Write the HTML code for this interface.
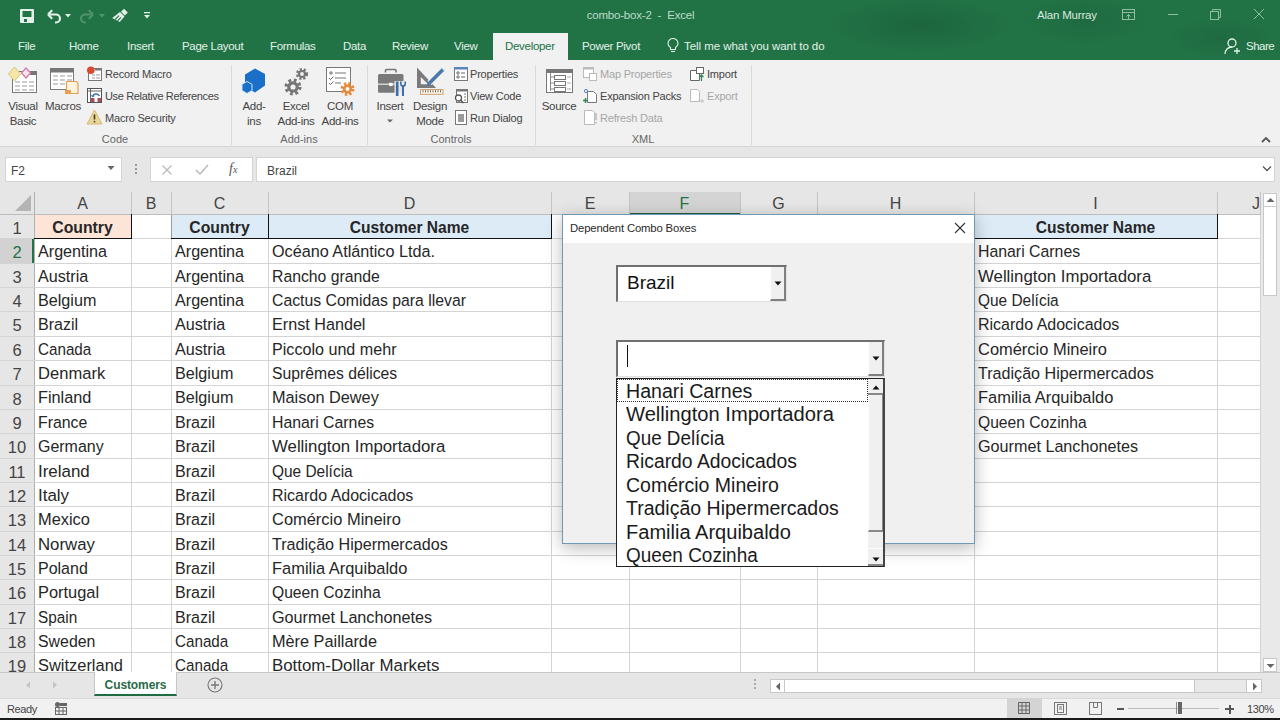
<!DOCTYPE html>
<html><head><meta charset="utf-8"><title>combo-box-2 - Excel</title>
<style>
*{margin:0;padding:0;box-sizing:border-box}
html,body{width:1280px;height:720px;overflow:hidden;background:#fff;font-family:"Liberation Sans",sans-serif}
.a{position:absolute}
.t{position:absolute;white-space:nowrap}
</style></head><body>

<div class="a" style="left:0;top:0;width:1280px;height:60px;background:#217346"></div>
<div class="a" style="left:820px;top:-5px;width:200px;height:60px;background:radial-gradient(ellipse at center,rgba(0,0,0,0.12),rgba(0,0,0,0) 70%)"></div>
<div class="a" style="left:1010px;top:-10px;width:150px;height:60px;background:radial-gradient(ellipse at center,rgba(0,0,0,0.07),rgba(0,0,0,0) 70%)"></div>
<div class="a" style="left:1160px;top:15px;width:120px;height:45px;background:radial-gradient(ellipse at center,rgba(0,0,0,0.08),rgba(0,0,0,0) 70%)"></div>
<!-- QAT icons -->
<svg class="a" style="left:20px;top:9px" width="14" height="14" viewBox="0 0 14 14"><rect x="0" y="0" width="14" height="14" rx="1" fill="#e3f1e8"/><rect x="2.5" y="2" width="9" height="6" fill="#217346"/><rect x="4" y="10" width="3" height="3" fill="#217346"/></svg>
<svg class="a" style="left:46px;top:8px" width="28" height="16" viewBox="0 0 28 16"><path d="M3.5 6.5h6.5a4 4 0 0 1 0 8h-1" fill="none" stroke="#e3f1e8" stroke-width="2.2"/><path d="M2 6.5l4.2-4.2M2 6.5l4.2 4.2" stroke="#e3f1e8" stroke-width="2.2" fill="none"/><path d="M19 6h6l-3 3.5z" fill="#e3f1e8"/></svg>
<svg class="a" style="left:79px;top:8px" width="28" height="16" viewBox="0 0 28 16"><path d="M12.5 6.5h-6.5a4 4 0 0 0 0 8h1" fill="none" stroke="#4f9468" stroke-width="2.2"/><path d="M14 6.5l-4.2-4.2M14 6.5l-4.2 4.2" stroke="#4f9468" stroke-width="2.2" fill="none"/><path d="M20 6h6l-3 3.5z" fill="#4f9468"/></svg>
<svg class="a" style="left:111px;top:8px" width="18" height="16" viewBox="0 0 18 16"><path d="M13 0.8l3.8 3.8-3 3-3.8-3.8z" fill="#e3f1e8"/><path d="M9 4l4.5 4.5-4.8 5.5-7.5-4z" fill="#e3f1e8"/><path d="M4.2 11.5l3.8-3.8M6.5 12.8l3.5-3.5" stroke="#217346" stroke-width="1.1"/></svg>
<svg class="a" style="left:142px;top:10px" width="10" height="10" viewBox="0 0 10 10"><rect x="2" y="2" width="6" height="1.3" fill="#e3f1e8"/><path d="M2 5h6l-3 3.5z" fill="#e3f1e8"/></svg>
<div class="t" style="left:0;top:6px;width:1280px;text-align:center;font-size:11.5px;line-height:18px;color:#bcdcc6;padding-left:1px;letter-spacing:-0.2px">combo-box-2&nbsp; -&nbsp; Excel</div>
<div class="t" style="left:1037px;top:6px;font-size:11.5px;line-height:18px;color:#d8eadf;letter-spacing:-0.2px">Alan Murray</div>
<svg class="a" style="left:1121px;top:8px" width="16" height="14" viewBox="0 0 16 14"><rect x="1.5" y="1.5" width="12" height="10" fill="none" stroke="#8fbf9f" stroke-width="1"/><path d="M1.5 4.5h12M7.5 11V6.5M5.5 8.5l2-2 2 2" fill="none" stroke="#8fbf9f" stroke-width="1"/></svg>
<div class="a" style="left:1168px;top:14px;width:10px;height:1px;background:#8fbf9f"></div>
<svg class="a" style="left:1209px;top:8px" width="13" height="13" viewBox="0 0 13 13"><rect x="1.5" y="3.5" width="8" height="8" fill="none" stroke="#8fbf9f"/><path d="M3.5 3.5v-2h8v8h-2" fill="none" stroke="#8fbf9f"/></svg>
<svg class="a" style="left:1253px;top:8px" width="12" height="12" viewBox="0 0 12 12"><path d="M1 1l10 10M11 1L1 11" stroke="#8fbf9f" stroke-width="1"/></svg>
<!-- tabs -->
<div class="t" style="left:18px;top:38px;font-size:11.5px;line-height:16px;letter-spacing:-0.3px;color:#e3f1e8">File</div>
<div class="t" style="left:69px;top:38px;font-size:11.5px;line-height:16px;letter-spacing:-0.3px;color:#e3f1e8">Home</div>
<div class="t" style="left:127px;top:38px;font-size:11.5px;line-height:16px;letter-spacing:-0.3px;color:#e3f1e8">Insert</div>
<div class="t" style="left:182px;top:38px;font-size:11.5px;line-height:16px;letter-spacing:-0.3px;color:#e3f1e8">Page Layout</div>
<div class="t" style="left:270px;top:38px;font-size:11.5px;line-height:16px;letter-spacing:-0.3px;color:#e3f1e8">Formulas</div>
<div class="t" style="left:343px;top:38px;font-size:11.5px;line-height:16px;letter-spacing:-0.3px;color:#e3f1e8">Data</div>
<div class="t" style="left:392px;top:38px;font-size:11.5px;line-height:16px;letter-spacing:-0.3px;color:#e3f1e8">Review</div>
<div class="t" style="left:454px;top:38px;font-size:11.5px;line-height:16px;letter-spacing:-0.3px;color:#e3f1e8">View</div>
<div class="a" style="left:493px;top:33px;width:75px;height:28px;background:#f1f1f1"></div>
<div class="t" style="left:505px;top:38px;font-size:11.5px;line-height:16px;letter-spacing:-0.3px;color:#217346">Developer</div>
<div class="t" style="left:582px;top:38px;font-size:11.5px;line-height:16px;letter-spacing:-0.3px;color:#e3f1e8">Power Pivot</div>
<svg class="a" style="left:667px;top:38px" width="12" height="16" viewBox="0 0 12 16"><path d="M3.5 11.5v-2C2 8.5 1 7 1 5.5a5 5 0 0 1 10 0c0 1.5-1 3-2.5 4v2z" fill="none" stroke="#e3f1e8" stroke-width="1.1"/><path d="M4 13.5h4" stroke="#e3f1e8" stroke-width="1.1"/></svg>
<div class="t" style="left:684px;top:38px;font-size:11.5px;line-height:16px;letter-spacing:-0.05px;color:#e3f1e8">Tell me what you want to do</div>
<svg class="a" style="left:1224px;top:37px" width="18" height="18" viewBox="0 0 18 18"><circle cx="8" cy="6" r="4" fill="none" stroke="#e3f1e8" stroke-width="1.3"/><path d="M1 17c0-4 3-7 7-7" fill="none" stroke="#e3f1e8" stroke-width="1.3"/><path d="M13 11v6M10 14h6" stroke="#e3f1e8" stroke-width="1.3"/></svg>
<div class="t" style="left:1246px;top:38px;font-size:11.5px;line-height:16px;letter-spacing:-0.5px;color:#e3f1e8">Share</div>

<div class="a" style="left:0;top:60px;width:1280px;height:87px;background:#f1f1f1;border-bottom:1px solid #d5d5d5"></div>
<!-- Code group -->
<svg class="a" style="left:7px;top:66px" width="32" height="28" viewBox="0 0 32 28"><rect x="5.5" y="5.5" width="24" height="21" fill="#fff" stroke="#7a7a7a"/><rect x="22" y="5" width="8" height="4" fill="#777"/><path d="M8 16h5M15 16h5M22 16h5M8 20h5M15 20h5M22 20h5M8 24h5M15 24h5M22 24h5" stroke="#999" stroke-width="1"/><path d="M7.5 1l6 7-6 7-6-7z" fill="#f6e7a6" stroke="#d9c57a"/><path d="M19 2l4.5 5-4.5 5-4.5-5z" fill="#fbe3ef" stroke="#d67aa3" stroke-width="1.2"/></svg>
<div class="t" style="left:0;top:99px;width:46px;text-align:center;font-size:11.5px;line-height:15px;color:#444;letter-spacing:-0.3px">Visual<br>Basic</div>
<svg class="a" style="left:49px;top:67px" width="32" height="28" viewBox="0 0 32 28"><rect x="1.5" y="1.5" width="23" height="21" fill="#fff" stroke="#7a7a7a"/><rect x="1" y="1" width="24" height="4.5" fill="#777"/><path d="M4 9h5M11 9h5M18 9h5M4 13h5M11 13h5M18 13h5M4 17h5M11 17h5" stroke="#999"/><path d="M17.5 14.5h10l1.5 2v10h-11.5z" fill="#fff3e0" stroke="#e8a050" stroke-width="1.2"/><rect x="16" y="23" width="6" height="4" fill="#e8a050"/></svg>
<div class="t" style="left:43px;top:99px;width:40px;text-align:center;font-size:11.5px;line-height:15px;color:#444;letter-spacing:-0.3px">Macros</div>
<svg class="a" style="left:86px;top:65px" width="18" height="18" viewBox="0 0 18 18"><rect x="2.5" y="3.5" width="13" height="12" fill="#fff" stroke="#777"/><rect x="9" y="3" width="7" height="2.5" fill="#777"/><path d="M6 10h3M10 10h4M6 13h3M10 13h4" stroke="#999"/><circle cx="4.8" cy="5.3" r="3.8" fill="#d9492e"/></svg>
<div class="t" style="left:105px;top:67px;font-size:11px;line-height:14px;color:#444;letter-spacing:-0.2px">Record Macro</div>
<svg class="a" style="left:86px;top:87px" width="18" height="18" viewBox="0 0 18 18"><rect x="1.5" y="1.5" width="14" height="14" fill="#fff" stroke="#555"/><path d="M1.5 4h14M4.5 1.5v14" stroke="#555" stroke-width="0.9"/><rect x="5" y="11" width="3.5" height="4" fill="#a85058"/><rect x="11.5" y="11" width="3.5" height="4" fill="#a85058"/><path d="M6.5 9.5c1-3 5-3.5 7-0.5" fill="none" stroke="#3f6fa8" stroke-width="1.3"/><path d="M5.5 7.8l1 2.2 2-1.2" fill="none" stroke="#3f6fa8" stroke-width="1"/></svg>
<div class="t" style="left:105px;top:89px;font-size:11px;line-height:14px;color:#444;letter-spacing:-0.35px">Use Relative References</div>
<svg class="a" style="left:86px;top:109px" width="18" height="16" viewBox="0 0 18 16"><path d="M8.5 1l7.5 14h-15z" fill="#ead59b" stroke="#d6bd74"/><path d="M8.5 5.5v5" stroke="#4a3a20" stroke-width="1.6"/><circle cx="8.5" cy="12.6" r="0.9" fill="#4a3a20"/></svg>
<div class="t" style="left:105px;top:111px;font-size:11px;line-height:14px;color:#444;letter-spacing:-0.2px">Macro Security</div>
<div class="t" style="left:95px;top:132px;width:40px;text-align:center;font-size:11px;line-height:14px;color:#666">Code</div>
<div class="a" style="left:231px;top:65px;width:1px;height:80px;background:#dadada"></div>
<!-- Add-ins group -->
<svg class="a" style="left:240px;top:67px" width="28" height="28" viewBox="0 0 28 28"><path d="M15 1.5l10 5.5v11.5l-10 7-10-5.5V7.5z" fill="#1a6fc9"/><path d="M7 14.5l5 2.8v6.2l-5 3-5-3v-6.2z" fill="#1a6fc9" stroke="#cfe3f7" stroke-width="1"/></svg>
<div class="t" style="left:234px;top:99px;width:40px;text-align:center;font-size:11.5px;line-height:15px;color:#444;letter-spacing:-0.3px">Add-<br>ins</div>
<svg class="a" style="left:282px;top:66px" width="30" height="30" viewBox="0 0 30 30"><g transform="translate(11,21)"><circle r="6.5" fill="none" stroke="#777" stroke-width="4" stroke-dasharray="2.6 2.5"/><circle r="4.2" fill="none" stroke="#777" stroke-width="3.2"/></g><g transform="translate(20,8)"><circle r="4.6" fill="none" stroke="#777" stroke-width="3" stroke-dasharray="2 1.8"/><circle r="3" fill="none" stroke="#777" stroke-width="2.2"/></g></svg>
<div class="t" style="left:271px;top:99px;width:50px;text-align:center;font-size:11.5px;line-height:15px;color:#444;letter-spacing:-0.3px">Excel<br>Add-ins</div>
<svg class="a" style="left:325px;top:66px" width="32" height="30" viewBox="0 0 32 30"><rect x="1.5" y="1.5" width="24" height="24" fill="#fff" stroke="#777"/><circle cx="6" cy="7" r="1.2" fill="none" stroke="#666"/><path d="M10 7h11M10 12h11M10 17h6" stroke="#777" stroke-width="1.2"/><path d="M4 12l1.5 1.5 3-3M4 17l1.5 1.5 3-3" fill="none" stroke="#666"/><g transform="translate(22.5,23)"><circle r="5.2" fill="none" stroke="#e58a3a" stroke-width="3.5" stroke-dasharray="2.2 1.9"/><circle r="3.3" fill="none" stroke="#e58a3a" stroke-width="2.6"/></g></svg>
<div class="t" style="left:315px;top:99px;width:50px;text-align:center;font-size:11.5px;line-height:15px;color:#444;letter-spacing:-0.3px">COM<br>Add-ins</div>
<div class="t" style="left:274px;top:132px;width:50px;text-align:center;font-size:11px;line-height:14px;color:#666">Add-ins</div>
<div class="a" style="left:367px;top:65px;width:1px;height:80px;background:#dadada"></div>
<!-- Controls group -->
<svg class="a" style="left:376px;top:68px" width="32" height="30" viewBox="0 0 32 30"><path d="M9.5 4.5V2.5a1 1 0 0 1 1-1h8.5a1 1 0 0 1 1 1v2" fill="none" stroke="#777" stroke-width="1.6"/><rect x="2" y="6" width="25.5" height="18.8" rx="1.5" fill="#7a7a7a"/><rect x="2" y="15.6" width="25.5" height="1.2" fill="#e8e8e8"/><rect x="13" y="14.8" width="3.6" height="3.2" fill="#fff"/><rect x="18.5" y="13" width="13" height="16" fill="#f1f1f1" opacity="0.9"/><path d="M21.2 13.5v14.5" stroke="#3c6ea5" stroke-width="2.6"/><path d="M27 17v11" stroke="#3c6ea5" stroke-width="2"/><path d="M24.8 13.5v2.5a2.2 2.2 0 0 0 4.4 0v-2.5" fill="none" stroke="#3c6ea5" stroke-width="1.6"/></svg>
<div class="t" style="left:370px;top:99px;width:40px;text-align:center;font-size:11.5px;line-height:15px;color:#444;letter-spacing:-0.3px">Insert</div>
<svg class="a" style="left:386px;top:118px" width="8" height="6" viewBox="0 0 8 6"><path d="M1 1.5h6l-3 3z" fill="#666"/></svg>
<svg class="a" style="left:416px;top:66px" width="30" height="30" viewBox="0 0 30 30"><path d="M1 1.5v20.5h19z" fill="#7a7a7a"/><path d="M4.8 11v7.3h7.3z" fill="#f1f1f1"/><path d="M27 3.5L13.5 17" stroke="#f1f1f1" stroke-width="6"/><path d="M27 3.5L13.5 17" stroke="#4a78a8" stroke-width="3.6"/><path d="M12.2 15.6l2.7 2.7-4.2 2z" fill="#4a78a8"/><path d="M25.2 1.8l3.5 3.5" stroke="#9ec3e6" stroke-width="1"/><rect x="4.5" y="23.5" width="22.5" height="4.8" fill="#fdf6ea" stroke="#c9a070" stroke-width="1"/><path d="M7 24.3v2M9.5 24.3v2M12 24.3v2M14.5 24.3v2M17 24.3v2M19.5 24.3v2M22 24.3v2M24.5 24.3v2" stroke="#6b5a48" stroke-width="1"/></svg>
<div class="t" style="left:410px;top:99px;width:40px;text-align:center;font-size:11.5px;line-height:15px;color:#444;letter-spacing:-0.3px">Design<br>Mode</div>
<svg class="a" style="left:453px;top:66px" width="16" height="16" viewBox="0 0 16 16"><rect x="1.5" y="1.5" width="13" height="13" fill="#fff" stroke="#777"/><rect x="1" y="1" width="14" height="2.5" fill="#5a86bf"/><circle cx="5" cy="7" r="1.2" fill="none" stroke="#666"/><circle cx="5" cy="11" r="1.2" fill="none" stroke="#666"/><path d="M8 7h4M8 11h4" stroke="#666"/></svg>
<div class="t" style="left:470px;top:67px;font-size:11px;line-height:14px;color:#444;letter-spacing:-0.2px">Properties</div>
<svg class="a" style="left:453px;top:88px" width="16" height="16" viewBox="0 0 16 16"><rect x="3.5" y="1.5" width="11" height="13" fill="#fff" stroke="#777"/><rect x="3" y="1" width="12" height="2.5" fill="#777"/><path d="M11 6h2M11 9h2M11 12h2" stroke="#777"/><circle cx="5.5" cy="10" r="3" fill="#fff" stroke="#555" stroke-width="1.3"/><path d="M7.5 12l3 3" stroke="#555" stroke-width="1.6"/></svg>
<div class="t" style="left:470px;top:89px;font-size:11px;line-height:14px;color:#444;letter-spacing:-0.2px">View Code</div>
<svg class="a" style="left:453px;top:109px" width="16" height="17" viewBox="0 0 16 17"><rect x="2.5" y="1.5" width="11" height="14" fill="#fff" stroke="#777"/><rect x="5" y="5" width="6" height="8" fill="#9a9a9a"/></svg>
<div class="t" style="left:470px;top:111px;font-size:11px;line-height:14px;color:#444;letter-spacing:-0.2px">Run Dialog</div>
<div class="t" style="left:425px;top:132px;width:52px;text-align:center;font-size:11px;line-height:14px;color:#666">Controls</div>
<div class="a" style="left:535px;top:65px;width:1px;height:80px;background:#dadada"></div>
<!-- XML group -->
<svg class="a" style="left:545px;top:68px" width="30" height="26" viewBox="0 0 30 26"><rect x="1.5" y="1.5" width="26" height="23" fill="#fff" stroke="#777"/><rect x="1" y="1" width="27" height="4" fill="#777"/><path d="M5.5 5v18M5.5 9h4M5.5 15h4M5.5 21h4" stroke="#888"/><rect x="9.5" y="7.5" width="11" height="4" fill="#fff" stroke="#777"/><rect x="9.5" y="13.5" width="11" height="4" fill="#fff" stroke="#777"/><rect x="9.5" y="19.5" width="11" height="4" fill="#fff" stroke="#777"/><path d="M22 9h4M22 15h4M22 21h4" stroke="#aaa"/></svg>
<div class="t" style="left:540px;top:99px;width:38px;text-align:center;font-size:11.5px;line-height:15px;color:#444;letter-spacing:-0.3px">Source</div>
<svg class="a" style="left:582px;top:66px" width="16" height="16" viewBox="0 0 16 16"><rect x="1.5" y="1.5" width="10" height="10" fill="#fff" stroke="#bbb"/><rect x="1" y="1" width="11" height="2.5" fill="#bbb"/><rect x="7.5" y="7.5" width="7" height="7" fill="#fff" stroke="#bbb"/></svg>
<div class="t" style="left:600px;top:67px;font-size:11px;line-height:14px;color:#a6a6a6;letter-spacing:-0.2px">Map Properties</div>
<svg class="a" style="left:582px;top:88px" width="16" height="16" viewBox="0 0 16 16"><path d="M5.5 3.5h6l3 3v8h-9z" fill="#fff" stroke="#777"/><circle cx="4" cy="3" r="1.6" fill="none" stroke="#5a86bf"/><path d="M3.5 10v5M1 12.5h5" stroke="#2e8b57" stroke-width="1.5"/></svg>
<div class="t" style="left:600px;top:89px;font-size:11px;line-height:14px;color:#444;letter-spacing:-0.2px">Expansion Packs</div>
<svg class="a" style="left:582px;top:109px" width="16" height="17" viewBox="0 0 16 17"><path d="M2.5 1.5h8l2 2v12h-10z" fill="#fff" stroke="#bbb"/><path d="M14 4v7M14 13v1.5" stroke="#bbb" stroke-width="1.5"/></svg>
<div class="t" style="left:600px;top:111px;font-size:11px;line-height:14px;color:#a6a6a6;letter-spacing:-0.2px">Refresh Data</div>
<svg class="a" style="left:689px;top:66px" width="16" height="16" viewBox="0 0 16 16"><path d="M1.5 4.5h7l2 2v8h-9z" fill="#fff" stroke="#666"/><rect x="7.5" y="1.5" width="7" height="6" fill="#fff" stroke="#666"/><path d="M12.5 15V9M10.5 11l2-2 2 2" fill="none" stroke="#2e8b57" stroke-width="1.3"/></svg>
<div class="t" style="left:707px;top:67px;font-size:11px;line-height:14px;color:#444;letter-spacing:-0.2px">Import</div>
<svg class="a" style="left:689px;top:88px" width="16" height="16" viewBox="0 0 16 16"><path d="M1.5 1.5h7l2 2v10h-9z" fill="#fff" stroke="#bbb"/><path d="M9 13h5M12.5 11l2 2-2 2" fill="none" stroke="#bbb"/></svg>
<div class="t" style="left:707px;top:89px;font-size:11px;line-height:14px;color:#a6a6a6;letter-spacing:-0.2px">Export</div>
<div class="t" style="left:623px;top:132px;width:40px;text-align:center;font-size:11px;line-height:14px;color:#666">XML</div>
<div class="a" style="left:751px;top:65px;width:1px;height:80px;background:#dadada"></div>
<svg class="a" style="left:1260px;top:135px" width="12" height="10" viewBox="0 0 12 10"><path d="M2 7l4-4 4 4" fill="none" stroke="#555" stroke-width="1.8"/></svg>

<div class="a" style="left:0;top:147px;width:1280px;height:45px;background:#e6e6e6"></div>
<div class="a" style="left:5px;top:157px;width:117px;height:25px;background:#fff;border:1px solid #d4d4d4"></div>
<div class="t" style="left:11px;top:164px;font-size:12px;line-height:15px;color:#444">F2</div>
<svg class="a" style="left:107px;top:165px" width="8" height="6" viewBox="0 0 8 6"><path d="M0.5 1h7l-3.5 4z" fill="#666"/></svg>
<div class="a" style="left:135px;top:164px;width:2px;height:2px;background:#999"></div>
<div class="a" style="left:135px;top:168px;width:2px;height:2px;background:#999"></div>
<div class="a" style="left:135px;top:172px;width:2px;height:2px;background:#999"></div>
<div class="a" style="left:150px;top:157px;width:103px;height:25px;background:#fff;border:1px solid #d4d4d4"></div>
<svg class="a" style="left:161px;top:164px" width="12" height="12" viewBox="0 0 12 12"><path d="M1.5 1.5l9 9M10.5 1.5l-9 9" stroke="#b8b8b8" stroke-width="1.2"/></svg>
<svg class="a" style="left:195px;top:164px" width="14" height="12" viewBox="0 0 14 12"><path d="M1 6l4 4 8-9" fill="none" stroke="#b8b8b8" stroke-width="1.5"/></svg>
<div class="t" style="left:229px;top:160px;font-family:'Liberation Serif',serif;font-style:italic;font-size:14px;line-height:18px;color:#555">f<span style="font-size:10px">x</span></div>
<div class="a" style="left:256px;top:157px;width:1019px;height:25px;background:#fff;border:1px solid #d4d4d4"></div>
<div class="t" style="left:267px;top:164px;font-size:12px;line-height:15px;color:#444">Brazil</div>
<svg class="a" style="left:1262px;top:165px" width="10" height="8" viewBox="0 0 10 8"><path d="M1 1.5l4 4 4-4" fill="none" stroke="#555" stroke-width="1.3"/></svg>

<div class="a" style="left:0;top:192px;width:1262px;height:480px;background:#fff"></div>
<div class="a" style="left:0;top:192px;width:1262px;height:22px;background:#e6e6e6"></div>
<div class="a" style="left:0;top:214px;width:34px;height:458px;background:#e6e6e6"></div>
<svg class="a" style="left:15px;top:195px" width="17" height="17"><polygon points="16,0 16,16 0,16" fill="#b4b4b4"/></svg>
<div class="a" style="left:629px;top:192px;width:111px;height:22px;background:#d4d4d4;border-bottom:1px solid #2a5a48"></div>
<div class="a" style="left:0;top:238.36px;width:34px;height:24.36px;background:#d2d2d2;border-right:2px solid #217346"></div>
<div class="a" style="left:34px;top:214.0px;width:97px;height:24.36px;background:#fce4d6"></div>
<div class="a" style="left:171px;top:214.0px;width:380px;height:24.36px;background:#ddebf7"></div>
<div class="a" style="left:974px;top:214.0px;width:243px;height:24.36px;background:#ddebf7"></div>
<div class="a" style="left:131px;top:192px;width:1px;height:480px;background:#d4d4d4"></div>
<div class="a" style="left:171px;top:192px;width:1px;height:480px;background:#d4d4d4"></div>
<div class="a" style="left:268px;top:192px;width:1px;height:480px;background:#d4d4d4"></div>
<div class="a" style="left:551px;top:192px;width:1px;height:480px;background:#d4d4d4"></div>
<div class="a" style="left:629px;top:192px;width:1px;height:480px;background:#d4d4d4"></div>
<div class="a" style="left:740px;top:192px;width:1px;height:480px;background:#d4d4d4"></div>
<div class="a" style="left:817px;top:192px;width:1px;height:480px;background:#d4d4d4"></div>
<div class="a" style="left:974px;top:192px;width:1px;height:480px;background:#d4d4d4"></div>
<div class="a" style="left:1217px;top:192px;width:1px;height:480px;background:#d4d4d4"></div>
<div class="a" style="left:1260px;top:192px;width:1px;height:480px;background:#d4d4d4"></div>
<div class="a" style="left:34px;top:192px;width:1px;height:480px;background:#b0b0b0"></div>
<div class="a" style="left:131px;top:192px;width:1px;height:22px;background:#c4c4c4"></div>
<div class="a" style="left:171px;top:192px;width:1px;height:22px;background:#c4c4c4"></div>
<div class="a" style="left:268px;top:192px;width:1px;height:22px;background:#c4c4c4"></div>
<div class="a" style="left:551px;top:192px;width:1px;height:22px;background:#c4c4c4"></div>
<div class="a" style="left:629px;top:192px;width:1px;height:22px;background:#c4c4c4"></div>
<div class="a" style="left:740px;top:192px;width:1px;height:22px;background:#c4c4c4"></div>
<div class="a" style="left:817px;top:192px;width:1px;height:22px;background:#c4c4c4"></div>
<div class="a" style="left:974px;top:192px;width:1px;height:22px;background:#c4c4c4"></div>
<div class="a" style="left:1217px;top:192px;width:1px;height:22px;background:#c4c4c4"></div>
<div class="a" style="left:1260px;top:192px;width:1px;height:22px;background:#c4c4c4"></div>
<div class="a" style="left:0;top:214px;width:1261px;height:1px;background:#bdbdbd"></div>
<div class="a" style="left:0;top:238px;width:1261px;height:1px;background:#d4d4d4"></div>
<div class="a" style="left:0;top:263px;width:1261px;height:1px;background:#d4d4d4"></div>
<div class="a" style="left:0;top:287px;width:1261px;height:1px;background:#d4d4d4"></div>
<div class="a" style="left:0;top:311px;width:1261px;height:1px;background:#d4d4d4"></div>
<div class="a" style="left:0;top:336px;width:1261px;height:1px;background:#d4d4d4"></div>
<div class="a" style="left:0;top:360px;width:1261px;height:1px;background:#d4d4d4"></div>
<div class="a" style="left:0;top:385px;width:1261px;height:1px;background:#d4d4d4"></div>
<div class="a" style="left:0;top:409px;width:1261px;height:1px;background:#d4d4d4"></div>
<div class="a" style="left:0;top:433px;width:1261px;height:1px;background:#d4d4d4"></div>
<div class="a" style="left:0;top:458px;width:1261px;height:1px;background:#d4d4d4"></div>
<div class="a" style="left:0;top:482px;width:1261px;height:1px;background:#d4d4d4"></div>
<div class="a" style="left:0;top:506px;width:1261px;height:1px;background:#d4d4d4"></div>
<div class="a" style="left:0;top:531px;width:1261px;height:1px;background:#d4d4d4"></div>
<div class="a" style="left:0;top:555px;width:1261px;height:1px;background:#d4d4d4"></div>
<div class="a" style="left:0;top:579px;width:1261px;height:1px;background:#d4d4d4"></div>
<div class="a" style="left:0;top:604px;width:1261px;height:1px;background:#d4d4d4"></div>
<div class="a" style="left:0;top:628px;width:1261px;height:1px;background:#d4d4d4"></div>
<div class="a" style="left:0;top:652px;width:1261px;height:1px;background:#d4d4d4"></div>
<div class="a" style="left:34px;top:238px;width:98px;height:1px;background:#111"></div>
<div class="a" style="left:131px;top:214px;width:1px;height:25px;background:#111"></div>
<div class="a" style="left:171px;top:215px;width:1px;height:23px;background:#9a9a9a"></div>
<div class="a" style="left:171px;top:238px;width:381px;height:1px;background:#111"></div>
<div class="a" style="left:268px;top:214px;width:1px;height:25px;background:#111"></div>
<div class="a" style="left:551px;top:214px;width:1px;height:25px;background:#111"></div>
<div class="a" style="left:974px;top:238px;width:244px;height:1px;background:#111"></div>
<div class="a" style="left:974px;top:214px;width:1px;height:25px;background:#111"></div>
<div class="a" style="left:1217px;top:214px;width:1px;height:25px;background:#111"></div>
<div class="t" style="left:34px;top:193px;width:97px;height:22px;line-height:21px;font-size:16px;color:#444;text-align:center">A</div>
<div class="t" style="left:131px;top:193px;width:40px;height:22px;line-height:21px;font-size:16px;color:#444;text-align:center">B</div>
<div class="t" style="left:171px;top:193px;width:97px;height:22px;line-height:21px;font-size:16px;color:#444;text-align:center">C</div>
<div class="t" style="left:268px;top:193px;width:283px;height:22px;line-height:21px;font-size:16px;color:#444;text-align:center">D</div>
<div class="t" style="left:551px;top:193px;width:78px;height:22px;line-height:21px;font-size:16px;color:#444;text-align:center">E</div>
<div class="t" style="left:629px;top:193px;width:111px;height:22px;line-height:21px;font-size:16px;color:#217346;text-align:center">F</div>
<div class="t" style="left:740px;top:193px;width:77px;height:22px;line-height:21px;font-size:16px;color:#444;text-align:center">G</div>
<div class="t" style="left:817px;top:193px;width:157px;height:22px;line-height:21px;font-size:16px;color:#444;text-align:center">H</div>
<div class="t" style="left:974px;top:193px;width:243px;height:22px;line-height:21px;font-size:16px;color:#444;text-align:center">I</div>
<div class="t" style="left:1252px;top:193px;height:22px;line-height:21px;font-size:16px;color:#444">J</div>
<div class="t" style="left:0;top:214.00px;width:34px;height:24.36px;line-height:28.16px;font-size:16.5px;color:#444;text-align:center">1</div>
<div class="t" style="left:0;top:238.36px;width:34px;height:24.36px;line-height:28.16px;font-size:16.5px;color:#217346;text-align:center">2</div>
<div class="t" style="left:0;top:262.72px;width:34px;height:24.36px;line-height:28.16px;font-size:16.5px;color:#444;text-align:center">3</div>
<div class="t" style="left:0;top:287.08px;width:34px;height:24.36px;line-height:28.16px;font-size:16.5px;color:#444;text-align:center">4</div>
<div class="t" style="left:0;top:311.44px;width:34px;height:24.36px;line-height:28.16px;font-size:16.5px;color:#444;text-align:center">5</div>
<div class="t" style="left:0;top:335.80px;width:34px;height:24.36px;line-height:28.16px;font-size:16.5px;color:#444;text-align:center">6</div>
<div class="t" style="left:0;top:360.16px;width:34px;height:24.36px;line-height:28.16px;font-size:16.5px;color:#444;text-align:center">7</div>
<div class="t" style="left:0;top:384.52px;width:34px;height:24.36px;line-height:28.16px;font-size:16.5px;color:#444;text-align:center">8</div>
<div class="t" style="left:0;top:408.88px;width:34px;height:24.36px;line-height:28.16px;font-size:16.5px;color:#444;text-align:center">9</div>
<div class="t" style="left:0;top:433.24px;width:34px;height:24.36px;line-height:28.16px;font-size:16.5px;color:#444;text-align:center">10</div>
<div class="t" style="left:0;top:457.60px;width:34px;height:24.36px;line-height:28.16px;font-size:16.5px;color:#444;text-align:center">11</div>
<div class="t" style="left:0;top:481.96px;width:34px;height:24.36px;line-height:28.16px;font-size:16.5px;color:#444;text-align:center">12</div>
<div class="t" style="left:0;top:506.32px;width:34px;height:24.36px;line-height:28.16px;font-size:16.5px;color:#444;text-align:center">13</div>
<div class="t" style="left:0;top:530.68px;width:34px;height:24.36px;line-height:28.16px;font-size:16.5px;color:#444;text-align:center">14</div>
<div class="t" style="left:0;top:555.04px;width:34px;height:24.36px;line-height:28.16px;font-size:16.5px;color:#444;text-align:center">15</div>
<div class="t" style="left:0;top:579.40px;width:34px;height:24.36px;line-height:28.16px;font-size:16.5px;color:#444;text-align:center">16</div>
<div class="t" style="left:0;top:603.76px;width:34px;height:24.36px;line-height:28.16px;font-size:16.5px;color:#444;text-align:center">17</div>
<div class="t" style="left:0;top:628.12px;width:34px;height:24.36px;line-height:28.16px;font-size:16.5px;color:#444;text-align:center">18</div>
<div class="t" style="left:0;top:652.48px;width:34px;height:24.36px;line-height:28.16px;font-size:16.5px;color:#444;text-align:center">19</div>
<div class="t" style="top:216.00px;height:24.36px;line-height:24.36px;font-size:15.8px;color:#262626;font-weight:bold;left:34px;width:97px;text-align:center;">Country</div>
<div class="t" style="top:216.00px;height:24.36px;line-height:24.36px;font-size:15.8px;color:#262626;font-weight:bold;left:171px;width:97px;text-align:center;">Country</div>
<div class="t" style="top:216.00px;height:24.36px;line-height:24.36px;font-size:15.6px;color:#262626;font-weight:bold;left:268px;width:283px;text-align:center;">Customer Name</div>
<div class="t" style="top:216.00px;height:24.36px;line-height:24.36px;font-size:15.6px;color:#262626;font-weight:bold;left:974px;width:243px;text-align:center;">Customer Name</div>
<div class="t" style="top:239.26px;height:24.36px;line-height:24.36px;font-size:16.3px;color:#262626;left:38px;transform:scaleX(0.991);transform-origin:0 0;">Argentina</div>
<div class="t" style="top:263.62px;height:24.36px;line-height:24.36px;font-size:16.3px;color:#262626;left:38px;transform:scaleX(0.992);transform-origin:0 0;">Austria</div>
<div class="t" style="top:287.98px;height:24.36px;line-height:24.36px;font-size:16.3px;color:#262626;left:38px;transform:scaleX(0.993);transform-origin:0 0;">Belgium</div>
<div class="t" style="top:312.34px;height:24.36px;line-height:24.36px;font-size:16.3px;color:#262626;left:38px;transform:scaleX(0.985);transform-origin:0 0;">Brazil</div>
<div class="t" style="top:336.70px;height:24.36px;line-height:24.36px;font-size:16.3px;color:#262626;left:38px;transform:scaleX(0.934);transform-origin:0 0;">Canada</div>
<div class="t" style="top:361.06px;height:24.36px;line-height:24.36px;font-size:16.3px;color:#262626;left:38px;transform:scaleX(1.017);transform-origin:0 0;">Denmark</div>
<div class="t" style="top:385.42px;height:24.36px;line-height:24.36px;font-size:16.3px;color:#262626;left:38px;">Finland</div>
<div class="t" style="top:409.78px;height:24.36px;line-height:24.36px;font-size:16.3px;color:#262626;left:38px;transform:scaleX(0.973);transform-origin:0 0;">France</div>
<div class="t" style="top:434.14px;height:24.36px;line-height:24.36px;font-size:16.3px;color:#262626;left:38px;transform:scaleX(0.980);transform-origin:0 0;">Germany</div>
<div class="t" style="top:458.50px;height:24.36px;line-height:24.36px;font-size:16.3px;color:#262626;left:38px;transform:scaleX(1.040);transform-origin:0 0;">Ireland</div>
<div class="t" style="top:482.86px;height:24.36px;line-height:24.36px;font-size:16.3px;color:#262626;left:38px;transform:scaleX(1.041);transform-origin:0 0;">Italy</div>
<div class="t" style="top:507.22px;height:24.36px;line-height:24.36px;font-size:16.3px;color:#262626;left:38px;transform:scaleX(1.006);transform-origin:0 0;">Mexico</div>
<div class="t" style="top:531.58px;height:24.36px;line-height:24.36px;font-size:16.3px;color:#262626;left:38px;transform:scaleX(1.030);transform-origin:0 0;">Norway</div>
<div class="t" style="top:555.94px;height:24.36px;line-height:24.36px;font-size:16.3px;color:#262626;left:38px;transform:scaleX(0.982);transform-origin:0 0;">Poland</div>
<div class="t" style="top:580.30px;height:24.36px;line-height:24.36px;font-size:16.3px;color:#262626;left:38px;transform:scaleX(1.008);transform-origin:0 0;">Portugal</div>
<div class="t" style="top:604.66px;height:24.36px;line-height:24.36px;font-size:16.3px;color:#262626;left:38px;transform:scaleX(0.940);transform-origin:0 0;">Spain</div>
<div class="t" style="top:629.02px;height:24.36px;line-height:24.36px;font-size:16.3px;color:#262626;left:38px;transform:scaleX(0.975);transform-origin:0 0;">Sweden</div>
<div class="t" style="top:653.38px;height:24.36px;line-height:24.36px;font-size:16.3px;color:#262626;left:38px;transform:scaleX(1.009);transform-origin:0 0;">Switzerland</div>
<div class="t" style="top:239.26px;height:24.36px;line-height:24.36px;font-size:16.3px;color:#262626;left:175px;transform:scaleX(0.991);transform-origin:0 0;">Argentina</div>
<div class="t" style="top:263.62px;height:24.36px;line-height:24.36px;font-size:16.3px;color:#262626;left:175px;transform:scaleX(0.991);transform-origin:0 0;">Argentina</div>
<div class="t" style="top:287.98px;height:24.36px;line-height:24.36px;font-size:16.3px;color:#262626;left:175px;transform:scaleX(0.991);transform-origin:0 0;">Argentina</div>
<div class="t" style="top:312.34px;height:24.36px;line-height:24.36px;font-size:16.3px;color:#262626;left:175px;transform:scaleX(0.992);transform-origin:0 0;">Austria</div>
<div class="t" style="top:336.70px;height:24.36px;line-height:24.36px;font-size:16.3px;color:#262626;left:175px;transform:scaleX(0.992);transform-origin:0 0;">Austria</div>
<div class="t" style="top:361.06px;height:24.36px;line-height:24.36px;font-size:16.3px;color:#262626;left:175px;transform:scaleX(0.993);transform-origin:0 0;">Belgium</div>
<div class="t" style="top:385.42px;height:24.36px;line-height:24.36px;font-size:16.3px;color:#262626;left:175px;transform:scaleX(0.993);transform-origin:0 0;">Belgium</div>
<div class="t" style="top:409.78px;height:24.36px;line-height:24.36px;font-size:16.3px;color:#262626;left:175px;transform:scaleX(0.985);transform-origin:0 0;">Brazil</div>
<div class="t" style="top:434.14px;height:24.36px;line-height:24.36px;font-size:16.3px;color:#262626;left:175px;transform:scaleX(0.985);transform-origin:0 0;">Brazil</div>
<div class="t" style="top:458.50px;height:24.36px;line-height:24.36px;font-size:16.3px;color:#262626;left:175px;transform:scaleX(0.985);transform-origin:0 0;">Brazil</div>
<div class="t" style="top:482.86px;height:24.36px;line-height:24.36px;font-size:16.3px;color:#262626;left:175px;transform:scaleX(0.985);transform-origin:0 0;">Brazil</div>
<div class="t" style="top:507.22px;height:24.36px;line-height:24.36px;font-size:16.3px;color:#262626;left:175px;transform:scaleX(0.985);transform-origin:0 0;">Brazil</div>
<div class="t" style="top:531.58px;height:24.36px;line-height:24.36px;font-size:16.3px;color:#262626;left:175px;transform:scaleX(0.985);transform-origin:0 0;">Brazil</div>
<div class="t" style="top:555.94px;height:24.36px;line-height:24.36px;font-size:16.3px;color:#262626;left:175px;transform:scaleX(0.985);transform-origin:0 0;">Brazil</div>
<div class="t" style="top:580.30px;height:24.36px;line-height:24.36px;font-size:16.3px;color:#262626;left:175px;transform:scaleX(0.985);transform-origin:0 0;">Brazil</div>
<div class="t" style="top:604.66px;height:24.36px;line-height:24.36px;font-size:16.3px;color:#262626;left:175px;transform:scaleX(0.985);transform-origin:0 0;">Brazil</div>
<div class="t" style="top:629.02px;height:24.36px;line-height:24.36px;font-size:16.3px;color:#262626;left:175px;transform:scaleX(0.934);transform-origin:0 0;">Canada</div>
<div class="t" style="top:653.38px;height:24.36px;line-height:24.36px;font-size:16.3px;color:#262626;left:175px;transform:scaleX(0.934);transform-origin:0 0;">Canada</div>
<div class="t" style="top:239.26px;height:24.36px;line-height:24.36px;font-size:16.3px;color:#262626;left:272px;transform:scaleX(0.995);transform-origin:0 0;">Océano Atlántico Ltda.</div>
<div class="t" style="top:263.62px;height:24.36px;line-height:24.36px;font-size:16.3px;color:#262626;left:272px;transform:scaleX(0.968);transform-origin:0 0;">Rancho grande</div>
<div class="t" style="top:287.98px;height:24.36px;line-height:24.36px;font-size:16.3px;color:#262626;left:272px;transform:scaleX(0.970);transform-origin:0 0;">Cactus Comidas para llevar</div>
<div class="t" style="top:312.34px;height:24.36px;line-height:24.36px;font-size:16.3px;color:#262626;left:272px;transform:scaleX(0.993);transform-origin:0 0;">Ernst Handel</div>
<div class="t" style="top:336.70px;height:24.36px;line-height:24.36px;font-size:16.3px;color:#262626;left:272px;transform:scaleX(0.990);transform-origin:0 0;">Piccolo und mehr</div>
<div class="t" style="top:361.06px;height:24.36px;line-height:24.36px;font-size:16.3px;color:#262626;left:272px;transform:scaleX(0.967);transform-origin:0 0;">Suprêmes délices</div>
<div class="t" style="top:385.42px;height:24.36px;line-height:24.36px;font-size:16.3px;color:#262626;left:272px;">Maison Dewey</div>
<div class="t" style="top:409.78px;height:24.36px;line-height:24.36px;font-size:16.3px;color:#262626;left:272px;transform:scaleX(0.973);transform-origin:0 0;">Hanari Carnes</div>
<div class="t" style="top:434.14px;height:24.36px;line-height:24.36px;font-size:16.3px;color:#262626;left:272px;transform:scaleX(1.031);transform-origin:0 0;">Wellington Importadora</div>
<div class="t" style="top:458.50px;height:24.36px;line-height:24.36px;font-size:16.3px;color:#262626;left:272px;transform:scaleX(0.948);transform-origin:0 0;">Que Delícia</div>
<div class="t" style="top:482.86px;height:24.36px;line-height:24.36px;font-size:16.3px;color:#262626;left:272px;transform:scaleX(0.982);transform-origin:0 0;">Ricardo Adocicados</div>
<div class="t" style="top:507.22px;height:24.36px;line-height:24.36px;font-size:16.3px;color:#262626;left:272px;transform:scaleX(1.010);transform-origin:0 0;">Comércio Mineiro</div>
<div class="t" style="top:531.58px;height:24.36px;line-height:24.36px;font-size:16.3px;color:#262626;left:272px;transform:scaleX(0.989);transform-origin:0 0;">Tradição Hipermercados</div>
<div class="t" style="top:555.94px;height:24.36px;line-height:24.36px;font-size:16.3px;color:#262626;left:272px;transform:scaleX(1.011);transform-origin:0 0;">Familia Arquibaldo</div>
<div class="t" style="top:580.30px;height:24.36px;line-height:24.36px;font-size:16.3px;color:#262626;left:272px;transform:scaleX(0.961);transform-origin:0 0;">Queen Cozinha</div>
<div class="t" style="top:604.66px;height:24.36px;line-height:24.36px;font-size:16.3px;color:#262626;left:272px;transform:scaleX(0.993);transform-origin:0 0;">Gourmet Lanchonetes</div>
<div class="t" style="top:629.02px;height:24.36px;line-height:24.36px;font-size:16.3px;color:#262626;left:272px;">Mère Paillarde</div>
<div class="t" style="top:653.38px;height:24.36px;line-height:24.36px;font-size:16.3px;color:#262626;left:272px;transform:scaleX(1.034);transform-origin:0 0;">Bottom-Dollar Markets</div>
<div class="t" style="top:239.26px;height:24.36px;line-height:24.36px;font-size:16.3px;color:#262626;left:978px;transform:scaleX(0.973);transform-origin:0 0;">Hanari Carnes</div>
<div class="t" style="top:263.62px;height:24.36px;line-height:24.36px;font-size:16.3px;color:#262626;left:978px;transform:scaleX(1.031);transform-origin:0 0;">Wellington Importadora</div>
<div class="t" style="top:287.98px;height:24.36px;line-height:24.36px;font-size:16.3px;color:#262626;left:978px;transform:scaleX(0.948);transform-origin:0 0;">Que Delícia</div>
<div class="t" style="top:312.34px;height:24.36px;line-height:24.36px;font-size:16.3px;color:#262626;left:978px;transform:scaleX(0.982);transform-origin:0 0;">Ricardo Adocicados</div>
<div class="t" style="top:336.70px;height:24.36px;line-height:24.36px;font-size:16.3px;color:#262626;left:978px;transform:scaleX(1.010);transform-origin:0 0;">Comércio Mineiro</div>
<div class="t" style="top:361.06px;height:24.36px;line-height:24.36px;font-size:16.3px;color:#262626;left:978px;transform:scaleX(0.989);transform-origin:0 0;">Tradição Hipermercados</div>
<div class="t" style="top:385.42px;height:24.36px;line-height:24.36px;font-size:16.3px;color:#262626;left:978px;transform:scaleX(1.011);transform-origin:0 0;">Familia Arquibaldo</div>
<div class="t" style="top:409.78px;height:24.36px;line-height:24.36px;font-size:16.3px;color:#262626;left:978px;transform:scaleX(0.961);transform-origin:0 0;">Queen Cozinha</div>
<div class="t" style="top:434.14px;height:24.36px;line-height:24.36px;font-size:16.3px;color:#262626;left:978px;transform:scaleX(0.993);transform-origin:0 0;">Gourmet Lanchonetes</div>
<div class="a" style="left:1261px;top:192px;width:19px;height:480px;background:#e9e9e9"></div>
<div class="a" style="left:1263px;top:193px;width:14px;height:14px;background:#fff;border:1px solid #c8c8c8"></div>
<svg class="a" style="left:1266px;top:197px" width="9" height="6" viewBox="0 0 9 6"><path d="M0.5 5h8l-4-4z" fill="#666"/></svg>
<div class="a" style="left:1263px;top:206px;width:14px;height:90px;background:#fff;border:1px solid #c8c8c8"></div>
<div class="a" style="left:1263px;top:658px;width:14px;height:14px;background:#fff;border:1px solid #c8c8c8"></div>
<svg class="a" style="left:1266px;top:663px" width="9" height="6" viewBox="0 0 9 6"><path d="M0.5 1h8l-4 4z" fill="#666"/></svg>

<div class="a" style="left:562px;top:214px;width:413px;height:330px;background:#f0f0f0;border:1px solid #7099b5;box-shadow:0 4px 16px rgba(0,0,0,0.28)"></div>
<div class="a" style="left:563px;top:215px;width:411px;height:28px;background:#fff"></div>
<div class="t" style="left:570px;top:221px;font-size:11.3px;line-height:14px;color:#2a2a2a;letter-spacing:-0.15px">Dependent Combo Boxes</div>
<svg class="a" style="left:954px;top:222px" width="12" height="12" viewBox="0 0 12 12"><path d="M1 1l10 10M11 1L1 11" stroke="#333" stroke-width="1.1"/></svg>
<!-- combo 1 -->
<div class="a" style="left:616px;top:265px;width:171px;height:37px;background:#fff;border-top:2px solid #707070;border-left:2px solid #707070;border-bottom:1px solid #e0e0e0;border-right:1px solid #e0e0e0"></div>
<div class="a" style="left:770px;top:267px;width:16px;height:34px;background:#f0f0f0;border-right:2px solid #808080;border-bottom:2px solid #808080;border-left:1px solid #fff"></div>
<svg class="a" style="left:774px;top:281px" width="8" height="5" viewBox="0 0 8 5"><path d="M0.5 0.5h7l-3.5 4z" fill="#111"/></svg>
<div class="t" style="left:627px;top:270.5px;font-size:19px;line-height:24px;color:#111">Brazil</div>
<!-- combo 2 -->
<div class="a" style="left:616px;top:340px;width:269px;height:37px;background:#fff;border-top:2px solid #707070;border-left:2px solid #707070;border-bottom:1px solid #e0e0e0;border-right:1px solid #e0e0e0"></div>
<div class="a" style="left:868px;top:342px;width:16px;height:34px;background:#f0f0f0;border-right:2px solid #808080;border-bottom:2px solid #808080;border-left:1px solid #fff"></div>
<svg class="a" style="left:872px;top:356px" width="8" height="5" viewBox="0 0 8 5"><path d="M0.5 0.5h7l-3.5 4z" fill="#111"/></svg>
<div class="a" style="left:627px;top:345px;width:1px;height:22px;background:#111"></div>
<!-- list -->
<div class="a" style="left:616px;top:378px;width:269px;height:189px;background:#fff;border:1px solid #222;border-right:2px solid #444"></div>
<div class="a" style="left:617px;top:379px;width:251px;height:23px;border:1px dotted #333"></div>
<div class="a" style="left:868px;top:379px;width:15px;height:187px;background:#f0f0f0"></div>
<div class="a" style="left:868px;top:379px;width:15px;height:16px;background:#f0f0f0;border-bottom:2px solid #888"></div>
<svg class="a" style="left:872px;top:385px" width="8" height="5" viewBox="0 0 8 5"><path d="M0.5 4.5h7l-3.5-4z" fill="#111"/></svg>
<div class="a" style="left:868px;top:395px;width:15px;height:137px;background:#f0f0f0;border-right:1px solid #888;border-bottom:2px solid #888;border-left:1px solid #fff"></div>
<div class="a" style="left:868px;top:548px;width:15px;height:18px;background:#f0f0f0;border-bottom:2px solid #888;border-top:1px solid #fff"></div>
<svg class="a" style="left:872px;top:557px" width="8" height="5" viewBox="0 0 8 5"><path d="M0.5 0.5h7l-3.5 4z" fill="#111"/></svg>
<div class="t" style="left:626px;top:380.00px;font-size:19.5px;line-height:23.47px;color:#1a1a1a;transform:scaleX(1.005);transform-origin:0 0">Hanari Carnes</div>
<div class="t" style="left:626px;top:403.47px;font-size:19.5px;line-height:23.47px;color:#1a1a1a;transform:scaleX(1.033);transform-origin:0 0">Wellington Importadora</div>
<div class="t" style="left:626px;top:426.94px;font-size:19.5px;line-height:23.47px;color:#1a1a1a;transform:scaleX(0.966);transform-origin:0 0">Que Delícia</div>
<div class="t" style="left:626px;top:450.41px;font-size:19.5px;line-height:23.47px;color:#1a1a1a;transform:scaleX(0.991);transform-origin:0 0">Ricardo Adocicados</div>
<div class="t" style="left:626px;top:473.88px;font-size:19.5px;line-height:23.47px;color:#1a1a1a;transform:scaleX(1.000);transform-origin:0 0">Comércio Mineiro</div>
<div class="t" style="left:626px;top:497.35px;font-size:19.5px;line-height:23.47px;color:#1a1a1a;transform:scaleX(1.000);transform-origin:0 0">Tradição Hipermercados</div>
<div class="t" style="left:626px;top:520.82px;font-size:19.5px;line-height:23.47px;color:#1a1a1a;transform:scaleX(1.028);transform-origin:0 0">Familia Arquibaldo</div>
<div class="t" style="left:626px;top:544.29px;font-size:19.5px;line-height:23.47px;color:#1a1a1a;transform:scaleX(0.972);transform-origin:0 0">Queen Cozinha</div>

<div class="a" style="left:0;top:672px;width:1280px;height:26px;background:#e6e6e6;border-top:1px solid #c6c6c6"></div>
<svg class="a" style="left:25px;top:680px" width="6" height="10" viewBox="0 0 6 10"><path d="M5 1.5v7L1 5z" fill="#c4c4c4"/></svg>
<svg class="a" style="left:52px;top:680px" width="6" height="10" viewBox="0 0 6 10"><path d="M1 1.5v7L5 5z" fill="#c4c4c4"/></svg>
<div class="a" style="left:94px;top:672px;width:83px;height:24px;background:#fff;border-left:1px solid #c6c6c6;border-right:1px solid #c6c6c6;border-bottom:2px solid #1e6b40"></div>
<div class="t" style="left:94px;top:677px;width:83px;text-align:center;font-size:12px;font-weight:bold;line-height:16px;color:#2a6b47;letter-spacing:-0.1px">Customers</div>
<svg class="a" style="left:207px;top:677px" width="16" height="16" viewBox="0 0 16 16"><circle cx="8" cy="8" r="7" fill="none" stroke="#777" stroke-width="1.1"/><path d="M8 4v8M4 8h8" stroke="#777" stroke-width="1.4"/></svg>
<div class="a" style="left:754px;top:679px;width:2px;height:2px;background:#aaa"></div>
<div class="a" style="left:754px;top:683px;width:2px;height:2px;background:#aaa"></div>
<div class="a" style="left:754px;top:687px;width:2px;height:2px;background:#aaa"></div>
<div class="a" style="left:770px;top:679px;width:492px;height:14px;background:#e9e9e9;border:1px solid #c8c8c8"></div>
<div class="a" style="left:770px;top:679px;width:15px;height:14px;background:#fff;border:1px solid #c8c8c8"></div>
<svg class="a" style="left:775px;top:682px" width="6" height="9" viewBox="0 0 6 9"><path d="M5 0.5v8l-4-4z" fill="#666"/></svg>
<div class="a" style="left:784px;top:679px;width:411px;height:14px;background:#fff;border:1px solid #c8c8c8"></div>
<div class="a" style="left:1246px;top:679px;width:16px;height:14px;background:#fff;border:1px solid #c8c8c8"></div>
<svg class="a" style="left:1252px;top:682px" width="6" height="9" viewBox="0 0 6 9"><path d="M1 0.5v8l4-4z" fill="#666"/></svg>
<!-- status bar -->
<div class="a" style="left:0;top:698px;width:1280px;height:20px;background:#f1f1f1;border-top:1px solid #dadada"></div>
<div class="t" style="left:7px;top:702px;font-size:11px;line-height:14px;color:#444;letter-spacing:-0.4px">Ready</div>
<svg class="a" style="left:54px;top:701px" width="14" height="14" viewBox="0 0 14 14"><circle cx="3.5" cy="3.5" r="2.5" fill="#666"/><rect x="6" y="2" width="7" height="3" fill="#666"/><rect x="1.5" y="6.5" width="11" height="7" fill="none" stroke="#666"/><path d="M5 7v6M9 7v6M2 10h10" stroke="#666"/></svg>
<div class="a" style="left:1007px;top:698px;width:35px;height:20px;background:#d4d4d4"></div>
<svg class="a" style="left:1017px;top:701px" width="14" height="14" viewBox="0 0 14 14"><rect x="1.5" y="1.5" width="11" height="11" fill="none" stroke="#666"/><path d="M5 1.5v11M9 1.5v11M1.5 5h11M1.5 9h11" stroke="#666"/></svg>
<svg class="a" style="left:1053px;top:701px" width="14" height="14" viewBox="0 0 14 14"><rect x="1.5" y="1.5" width="12" height="12" fill="none" stroke="#777"/><rect x="4.5" y="3.5" width="6" height="8" fill="none" stroke="#777"/><path d="M6 6h3M6 8h3" stroke="#777"/></svg>
<svg class="a" style="left:1088px;top:701px" width="15" height="14" viewBox="0 0 15 14"><rect x="1.5" y="1.5" width="12" height="12" fill="none" stroke="#777"/><path d="M5.5 1.5v5h4M9.5 1.5v5" fill="none" stroke="#777"/></svg>
<div class="a" style="left:1117px;top:708px;width:7px;height:2px;background:#555"></div>
<div class="a" style="left:1128px;top:708px;width:91px;height:1px;background:#bbb"></div>
<div class="a" style="left:1176px;top:702px;width:1px;height:12px;background:#888"></div>
<div class="a" style="left:1178px;top:702px;width:4px;height:12px;background:#666"></div>
<div class="a" style="left:1225px;top:708px;width:9px;height:2px;background:#555"></div>
<div class="a" style="left:1228.5px;top:704.5px;width:2px;height:9px;background:#555"></div>
<div class="t" style="left:1247px;top:702px;font-size:11px;line-height:14px;color:#444;letter-spacing:-0.4px">130%</div>
<div class="a" style="left:0;top:718px;width:1280px;height:2px;background:#1a1a1a"></div>

</body></html>
